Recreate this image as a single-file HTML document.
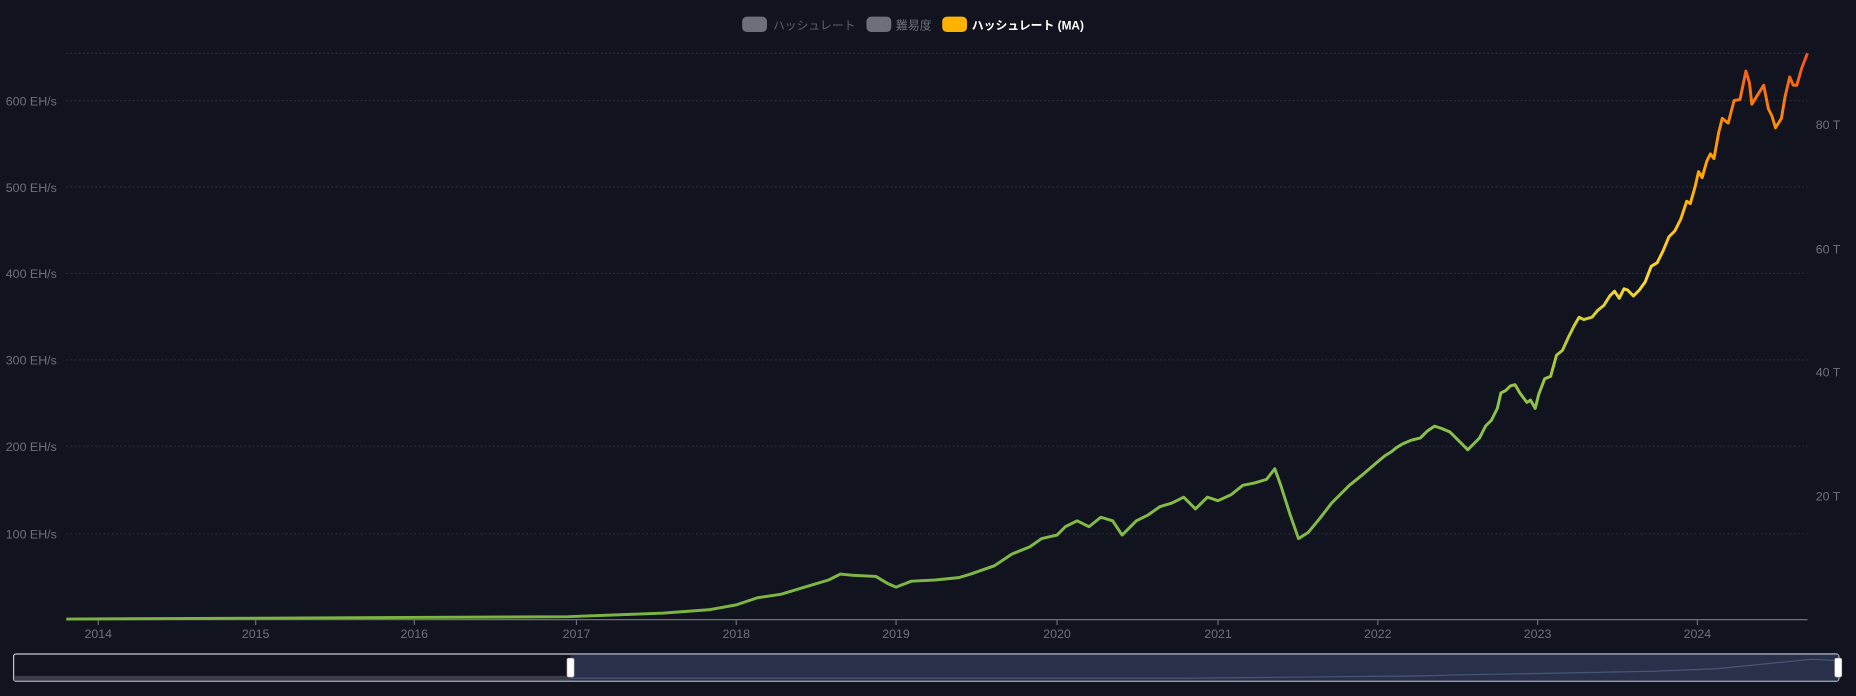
<!DOCTYPE html>
<html><head><meta charset="utf-8"><style>
html,body{margin:0;padding:0;background:#11131e;width:1856px;height:696px;overflow:hidden}
svg{display:block}
</style></head><body>
<svg width="1856" height="696" viewBox="0 0 1568 588" xmlns="http://www.w3.org/2000/svg" font-family="Liberation Sans, Noto Sans CJK JP, sans-serif">
<defs>
<linearGradient id="g" gradientUnits="userSpaceOnUse" x1="0" y1="524" x2="0" y2="45">
<stop offset="0" stop-color="#7cb342"/>
<stop offset="0.38" stop-color="#8bc34a"/>
<stop offset="0.5" stop-color="#c0ca33"/>
<stop offset="0.6" stop-color="#fdd835"/>
<stop offset="0.75" stop-color="#ffb300"/>
<stop offset="0.85" stop-color="#ff9800"/>
<stop offset="1" stop-color="#f4511e"/>
</linearGradient>
</defs>
<rect width="1568" height="588" fill="#11131e"/>
<g stroke="#2a2d38" stroke-width="1" stroke-dasharray="1.5 2">
<line x1="56" y1="45" x2="1527" y2="45"/>
<line x1="56" y1="85" x2="1527" y2="85"/>
<line x1="56" y1="158" x2="1527" y2="158"/>
<line x1="56" y1="231" x2="1527" y2="231"/>
<line x1="56" y1="304" x2="1527" y2="304"/>
<line x1="56" y1="377" x2="1527" y2="377"/>
<line x1="56" y1="451" x2="1527" y2="451"/>
</g>
<g fill="#6e7079" font-size="10.5" text-anchor="end">
<text x="48" y="89">600 EH/s</text>
<text x="48" y="162">500 EH/s</text>
<text x="48" y="235">400 EH/s</text>
<text x="48" y="308">300 EH/s</text>
<text x="48" y="381">200 EH/s</text>
<text x="48" y="455">100 EH/s</text>
</g>
<g fill="#6e7079" font-size="10.5">
<text x="1534" y="109">80 T</text>
<text x="1534" y="214">60 T</text>
<text x="1534" y="318">40 T</text>
<text x="1534" y="423">20 T</text>
</g>
<line x1="56" y1="523.5" x2="1527" y2="523.5" stroke="#6e7079"/>
<g stroke="#6e7079">
<line x1="83" y1="524" x2="83" y2="528"/><line x1="216" y1="524" x2="216" y2="528"/>
<line x1="350" y1="524" x2="350" y2="528"/><line x1="487" y1="524" x2="487" y2="528"/>
<line x1="622" y1="524" x2="622" y2="528"/><line x1="757" y1="524" x2="757" y2="528"/>
<line x1="893" y1="524" x2="893" y2="528"/><line x1="1029" y1="524" x2="1029" y2="528"/>
<line x1="1164" y1="524" x2="1164" y2="528"/><line x1="1299" y1="524" x2="1299" y2="528"/>
<line x1="1434" y1="524" x2="1434" y2="528"/>
</g>
<g fill="#6e7079" font-size="10.5" text-anchor="middle">
<text x="83" y="539">2014</text><text x="216" y="539">2015</text><text x="350" y="539">2016</text>
<text x="487" y="539">2017</text><text x="622" y="539">2018</text><text x="757" y="539">2019</text>
<text x="893" y="539">2020</text><text x="1029" y="539">2021</text><text x="1164" y="539">2022</text>
<text x="1299" y="539">2023</text><text x="1434" y="539">2024</text>
</g>
<polyline fill="none" stroke="url(#g)" stroke-width="2.5" stroke-linejoin="round" points="56,523 480,521 560,518 600,515 622,511 640,505 660,502 680,496 700,490 710,485 720,486 740,487 750,493 757,496 770,491 790,490 810,488 820,485 840,478 855,468 870,462 880,455 893,452 900,445 910,440 920,445 930,437 940,440 948,452 960,440 970,435 980,428 990,425 1000,420 1010,430 1020,420 1029,423 1040,418 1050,410 1060,408 1070,405 1077,396 1082,410 1090,435 1097,455 1105,450 1115,438 1125,425 1140,410 1150,402 1164,390 1170,385 1175,382 1180,378 1185,375 1192,372 1200,370 1206,364 1212,360 1218,362 1225,365 1230,370 1235,375 1240,380 1245,375 1250,370 1255,360 1260,355 1265,345 1268,332 1272,330 1276,326 1280,325 1284,332 1290,340 1293,338 1297,345 1300,333 1305,320 1310,318 1315,300 1320,296 1325,285 1330,275 1334,268 1338,270 1345,268 1350,262 1355,258 1360,250 1364,246 1368,252 1372,244 1375,245 1380,250 1385,245 1390,238 1395,225 1400,222 1405,212 1410,200 1415,195 1420,185 1425,170 1428,172 1432,158 1435,145 1438,150 1442,136 1445,130 1448,134 1452,112 1455,100 1460,104 1465,85 1470,84 1475,60 1478,70 1480,88 1485,80 1490,72 1494,92 1497,98 1500,108 1505,100 1508,82 1512,65 1515,72 1518,72 1522,58 1527,45"/>
<!-- legend -->
<rect x="627" y="14" width="21" height="13" rx="4" fill="#6e7079"/>
<text x="653" y="25" font-size="10" fill="#5d616b">ハッシュレート</text>
<rect x="732" y="14" width="21" height="13" rx="4" fill="#6e7079"/>
<text x="757" y="25" font-size="10" fill="#6e7079">難易度</text>
<rect x="796" y="14" width="21" height="13" rx="4" fill="#ffb300"/>
<text x="821" y="25" font-size="10" fill="#ffffff" font-weight="bold">ハッシュレート (MA)</text>
<!-- slider -->
<rect x="11.5" y="552.5" width="1542" height="23" rx="2" fill="#11131e" stroke="#c6cad6"/>
<rect x="482" y="553" width="1071" height="22" fill="#28304a"/>
<rect x="12" y="571" width="470" height="4" fill="#3a3d4a"/>
<polyline fill="none" stroke="#4a5577" stroke-width="1" points="482,573 1000,573 1100,572 1200,571 1240,570 1300,569 1400,567 1450,565 1500,560 1530,557 1553,558"/>
<rect x="479" y="556" width="6" height="16" rx="1.5" fill="#fff" stroke="#aaa" stroke-width="0.5"/>
<rect x="1550" y="556" width="6" height="16" rx="1.5" fill="#fff" stroke="#aaa" stroke-width="0.5"/>
</svg>
</body></html>
